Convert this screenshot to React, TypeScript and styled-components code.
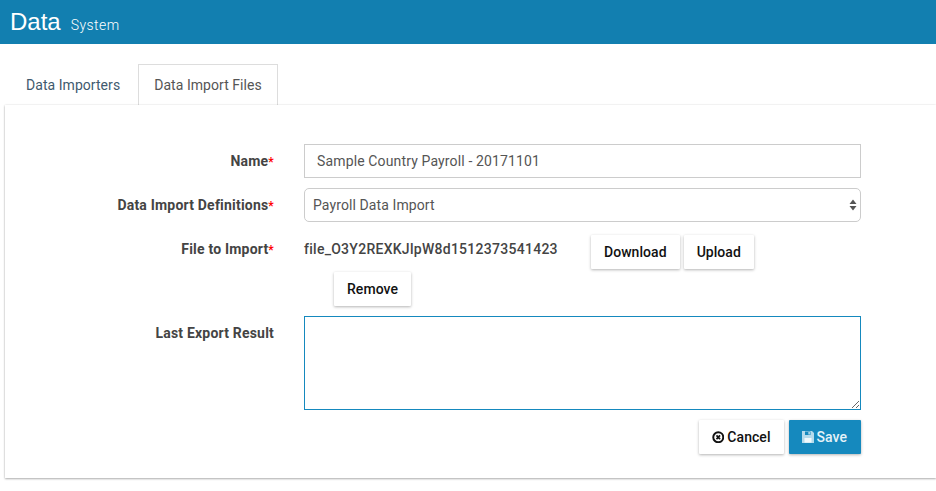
import React from 'react';
import styled, { createGlobalStyle } from 'styled-components';

const GlobalStyle = createGlobalStyle`
  html, body { margin: 0; padding: 0; background: #fff; }
  body { font-family: Roboto, "Liberation Sans", sans-serif; color: #444; overflow: hidden; }
  * { box-sizing: border-box; }
`;

const Page = styled.div`
  width: 936px;
  height: 491px;
  display: flex;
  flex-direction: column;
`;

const Header = styled.header`
  height: 44px;
  background: #127fb0;
  color: #fff;
  display: flex;
  align-items: baseline;
  padding: 5px 0 0 10px;
  gap: 10px;
`;

const Brand = styled.span`
  font-size: 24px;
  line-height: 33px;
  font-family: "Liberation Sans", Arial, sans-serif;
`;

const Sub = styled.span`
  font-size: 14px;
  font-weight: 300;
  letter-spacing: 0.45px;
`;

const Tabs = styled.nav`
  display: flex;
  padding: 20px 0 0 10px;
  height: 61px;
`;

const Tab = styled.div<{ $active?: boolean }>`
  height: 41px;
  padding: 0 15px;
  display: flex;
  align-items: center;
  font-size: 14px;
  letter-spacing: 0.05px;
  margin-right: ${p => (p.$active ? 0 : 2)}px;
  color: ${p => (p.$active ? '#555' : '#3f5a6e')};
  border: 1px solid ${p => (p.$active ? '#ddd' : 'transparent')};
  border-bottom: 0;
  background: #fff;
`;

const Panel = styled.main`
  margin-left: 5px;
  height: 373px;
  background: #fff;
  box-shadow: 0 1px 2px rgba(0, 0, 0, 0.3), 0 0 2px rgba(0, 0, 0, 0.1);
  padding: 39px 75px 0 0;
  display: flex;
  flex-direction: column;
`;

const Row = styled.div<{ $mb: number }>`
  display: grid;
  grid-template-columns: 269px 1fr;
  column-gap: 30px;
  margin-bottom: ${p => p.$mb}px;
`;

const Label = styled.label<{ $top: number }>`
  text-align: right;
  font-size: 14px;
  font-weight: 700;
  letter-spacing: 0.2px;
  color: #444;
  line-height: 20px;
  padding-top: ${p => p.$top}px;
`;

const Star = styled.span`
  color: #f00;
  font-size: 12px;
`;

const Input = styled.input`
  width: 100%;
  height: 34px;
  border: 1px solid #ccc;
  padding: 0 12px;
  font: 14px Roboto, sans-serif;
  letter-spacing: 0.14px;
  color: #555;
  outline: none;
`;

const SelectWrap = styled.div`
  position: relative;
  height: 34px;
`;

const Select = styled.select`
  width: 100%;
  height: 34px;
  appearance: none;
  background: #fff;
  border: 1px solid #ccc;
  border-radius: 5px;
  padding: 0 8px;
  font: 14px Roboto, sans-serif;
  letter-spacing: 0.1px;
  color: #555;
  outline: none;
`;

const Arrows = styled.svg`
  position: absolute;
  right: 4px;
  top: 11px;
  width: 8px;
  height: 12px;
  fill: #555;
`;

const FileLine = styled.div`
  display: flex;
  align-items: flex-start;
`;

const FileName = styled.span`
  width: 287px;
  padding-top: 4px;
  font-size: 14px;
  font-weight: 500;
  letter-spacing: 0.27px;
  line-height: 20px;
  color: #444;
`;

const Button = styled.button<{ $primary?: boolean }>`
  height: 34px;
  padding: 0 ${p => (p.$primary ? 14 : 13)}px 0 ${p => (p.$primary ? 12 : 13)}px;
  border: 0;
  border-radius: 1px;
  display: inline-flex;
  align-items: center;
  gap: ${p => (p.$primary ? 2 : 3)}px;
  font: 500 14px Roboto, sans-serif;
  letter-spacing: 0.05px;
  background: ${p => (p.$primary ? '#1589be' : '#fff')};
  color: ${p => (p.$primary ? '#e4f2f8' : '#111')};
  box-shadow: 0 1px 3px rgba(0, 0, 0, 0.3);
  margin-right: 4px;
  svg { width: ${p => (p.$primary ? 14 : 12.5)}px; height: ${p => (p.$primary ? 14 : 12.5)}px; flex: none; }
`;

const RemoveLine = styled.div`
  padding: 3px 0 0 30px;
`;

const TextArea = styled.textarea`
  width: 100%;
  height: 94px;
  display: block;
  border: 1px solid #1589be;
  outline: none;
  resize: vertical;
  background: #fff;
`;

const Actions = styled.div`
  display: flex;
  justify-content: flex-end;
  gap: 5px;
  margin-top: 10px;
  ${Button} { margin-right: 0; }
`;

export default function App() {
  return (
    <Page>
      <GlobalStyle />
      <Header>
        <Brand>Data</Brand>
        <Sub>System</Sub>
      </Header>
      <Tabs>
        <Tab>Data Importers</Tab>
        <Tab $active>Data Import Files</Tab>
      </Tabs>
      <Panel>
        <Row $mb={10}>
          <Label $top={7}>Name<Star>*</Star></Label>
          <Input defaultValue="Sample Country Payroll - 20171101" />
        </Row>
        <Row $mb={13}>
          <Label $top={7}>Data Import Definitions<Star>*</Star></Label>
          <SelectWrap>
            <Select defaultValue="payroll">
              <option value="payroll">Payroll Data Import</option>
            </Select>
            <Arrows viewBox="0 0 8 12">
              <path d="M4 0.5 7.5 5H0.5zM4 11.5 0.5 7h7z" />
            </Arrows>
          </SelectWrap>
        </Row>
        <Row $mb={10}>
          <Label $top={4}>File to Import<Star>*</Star></Label>
          <div>
            <FileLine>
              <FileName>file_O3Y2REXKJlpW8d1512373541423</FileName>
              <Button>Download</Button>
              <Button>Upload</Button>
            </FileLine>
            <RemoveLine>
              <Button>Remove</Button>
            </RemoveLine>
          </div>
        </Row>
        <Row $mb={0}>
          <Label $top={7}>Last Export Result</Label>
          <div>
            <TextArea />
            <Actions>
              <Button>
                <svg viewBox="0 0 14 14" fill="none" stroke="currentColor">
                  <circle cx="7" cy="7" r="5.6" strokeWidth="2.2" />
                  <path d="M5 5l4 4M9 5l-4 4" strokeWidth="2" />
                </svg>
                Cancel
              </Button>
              <Button $primary>
                <svg viewBox="0 0 14 14">
                  <path d="M1 1h10l2 2v10H1z" fill="#b5dbec" />
                  <path d="M4 1.5h5.5v3.5H4z" fill="#1589be" />
                  <path d="M7.5 2h1.2v2.4H7.5z" fill="#e4f2f8" />
                  <path d="M3.5 8h7v4.6h-7z" fill="#f2f9fc" />
                </svg>
                Save
              </Button>
            </Actions>
          </div>
        </Row>
      </Panel>
    </Page>
  );
}
